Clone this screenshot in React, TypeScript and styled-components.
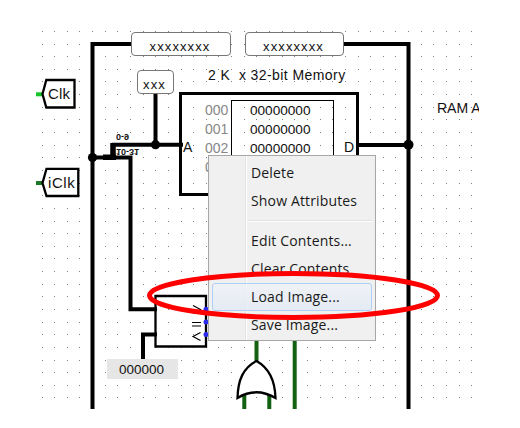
import React from "react";
import styled, { createGlobalStyle } from "styled-components";

const Global = createGlobalStyle`
  body { margin: 0; background: #fff; }
  * { box-sizing: border-box; }
`;

const Canvas = styled.main`
  position: relative;
  width: 520px;
  height: 428px;
  overflow: hidden;
  background: #fff;
  font-family: "Liberation Sans", Arial, sans-serif;
  color: #111;
`;

const Drawing = styled.svg`
  position: absolute;
  inset: 0;
  width: 520px;
  height: 428px;
  pointer-events: none;
`;

const Label = styled.span<{ $x: number; $y: number; $size?: number; $gap?: number; $clip?: number }>`
  position: absolute;
  left: ${(p) => p.$x}px;
  top: ${(p) => p.$y}px;
  width: ${(p) => (p.$clip ? `${p.$clip}px` : "auto")};
  overflow: ${(p) => (p.$clip ? "hidden" : "visible")};
  font-size: ${(p) => p.$size ?? 14}px;
  letter-spacing: ${(p) => p.$gap ?? 0}px;
  line-height: 18px;
  white-space: pre;
`;

const Flipped = styled(Label)`
  line-height: 10px;
  font-weight: 700;
  transform: scaleY(-1);
`;

const Pin = styled.div<{ $x: number; $y: number; $w: number }>`
  position: absolute;
  left: ${(p) => p.$x}px;
  top: ${(p) => p.$y}px;
  width: ${(p) => p.$w}px;
  height: 24px;
  display: flex;
  align-items: center;
  justify-content: center;
  padding-top: 5px;
  padding-right: 2px;
  border: 1px solid #777;
  border-radius: 4px;
  background: #fff;
  font-size: 13px;
  letter-spacing: 1.1px;
`;

const Constant = styled.div`
  position: absolute;
  left: 107px;
  top: 359px;
  width: 71px;
  height: 20px;
  padding-left: 12px;
  background: #e6e6e6;
  font-size: 13.5px;
  line-height: 21px;
`;

const Memory = styled.section`
  position: absolute;
  left: 179px;
  top: 92px;
  width: 180px;
  height: 104px;
  display: grid;
  grid-template-columns: 49px 103px;
  border: 3px solid #000;
  padding-top: 5px;
  font-size: 14px;
  line-height: 19px;
`;

const Addresses = styled.div`
  display: flex;
  flex-direction: column;
  padding-top: 1px;
  padding-left: 23px;
  color: #888;
`;

const Words = styled.div`
  display: flex;
  flex-direction: column;
  padding-left: 18px;
  border: 1px solid #000;
  font-size: 13.6px;
`;

const Menu = styled.nav`
  position: absolute;
  left: 208px;
  top: 155px;
  width: 168px;
  height: 186px;
  display: flex;
  flex-direction: column;
  padding: 3px;
  border: 1px solid #a6a6a6;
  background: linear-gradient(90deg, #f0f0f0 36px, #e2e3e3 36px, #e2e3e3 37px, #fff 37px, #fff 38px, #f0f0f0 38px);
  font-family: "Open Sans", "Noto Sans", sans-serif;
  font-size: 14px;
  letter-spacing: 0.15px;
  color: #1a1a1a;
`;

const Item = styled.div<{ $active?: boolean }>`
  height: 28px;
  flex: none;
  display: flex;
  align-items: center;
  padding: 0 0 2px 38px;
  border: 1px solid ${(p) => (p.$active ? "#aecff7" : "transparent")};
  border-radius: 3px;
  background: ${(p) => (p.$active ? "linear-gradient(#eff2f6cc, #e2eaf5cc)" : "none")};
  white-space: nowrap;
`;

const Separator = styled.div`
  flex: none;
  height: 2px;
  margin: 5px 0 5px 36px;
  border-top: 1px solid #e0e0e0;
  border-bottom: 1px solid #fff;
`;

const xs = Array.from({ length: 35 }, (_, i) => 42 + i * 12.64);
const ys = Array.from({ length: 30 }, (_, i) => 31.4 + i * 12.64);

export default function App() {
  return (
    <>
      <Global />
      <Canvas>
        <Drawing>
          <g fill="#808080">
            {ys.map((y) => xs.map((x) => <rect key={`${x}-${y}`} x={Math.round(x - 0.5)} y={Math.round(y - 0.5)} width="1" height="1" />))}
          </g>
          <g fill="none" stroke="#000" strokeWidth="4">
            <path d="M132 44H92.5V409M344 44H408.5V409M155.5 92V144.7M112 144.7H183M92 157.5H130.5V309.3H157M357 145H408M143 361V334.5H157" />
            <path d="M113 143V160M103 157.3H116" strokeWidth="5.5" />
          </g>
          <circle cx="155.5" cy="144.7" r="4.6" />
          <circle cx="92.5" cy="157.5" r="4.6" />
          <circle cx="408.5" cy="144.7" r="5" />
          <path d="M36 94.3H44" stroke="#17c52b" strokeWidth="4" />
          <path d="M36 183H44" stroke="#1c7a26" strokeWidth="4" />
          <g fill="#fff" stroke="#000" strokeWidth="2.3">
            <path d="M42.5 94L46.3 80H74.5V107.5H46.3Z" />
            <path d="M42.5 183L46.5 168.8H78.3V196H46.5Z" />
            <path d="M155.5 296H206V346.5H155.5Z" fill="none" />
          </g>
          <path d="M256.5 340V362M294.7 340V409" stroke="#126212" strokeWidth="4" />
          <path d="M244.3 395V409M269.3 395V409" stroke="#126212" strokeWidth="4" />
          <path d="M256.5 361C243 368 238 380 237.5 398Q256 386.5 275.5 398C275 380 269 368 256.5 361Z" fill="#fff" stroke="#000" strokeWidth="2.3" />
          <path d="M193 305.5L200.5 309.5L193 313.5M192 322.5H201M192 326H201M200.5 332.5L193 336.5L200.5 340.5" fill="none" stroke="#000" strokeWidth="1.2" />
          <g fill="#2a2af0">
            <circle cx="206" cy="309.3" r="2.5" />
            <circle cx="206" cy="322" r="2.5" />
            <circle cx="206" cy="334.5" r="2.5" />
          </g>
        </Drawing>
        <Pin $x={131} $y={32} $w={100}>xxxxxxxx</Pin>
        <Pin $x={245} $y={32} $w={99}>xxxxxxxx</Pin>
        <Pin $x={137} $y={70} $w={37}>xxx</Pin>
        <Label $x={48} $y={85} $size={15} $gap={0.2}>Clk</Label>
        <Label $x={48} $y={174} $size={15} $gap={0.6}>iClk</Label>
        <Label $x={208} $y={66} $gap={0.42}>{"2 K  x 32-bit Memory"}</Label>
        <Label $x={437} $y={99} $clip={42}>RAM A</Label>
        <Flipped $x={116} $y={132} $size={9}>0-9</Flipped>
        <Flipped $x={116} $y={147} $size={9}>10-31</Flipped>
        <Label $x={183} $y={138}>A</Label>
        <Label $x={344} $y={138}>D</Label>
        <Memory>
          <Addresses>
            {["000", "001", "002", "003"].map((a) => <span key={a}>{a}</span>)}
          </Addresses>
          <Words>
            {[0, 1, 2].map((i) => <span key={i}>00000000</span>)}
          </Words>
        </Memory>
        <Constant>000000</Constant>
        <Menu>
          <Item>Delete</Item>
          <Item>Show Attributes</Item>
          <Separator />
          <Item>Edit Contents...</Item>
          <Item>Clear Contents</Item>
          <Item $active>Load Image...</Item>
          <Item>Save Image...</Item>
        </Menu>
        <Drawing>
          <ellipse cx="293.5" cy="295.5" rx="144" ry="22" fill="none" stroke="#f00" strokeWidth="5" />
        </Drawing>
      </Canvas>
    </>
  );
}
